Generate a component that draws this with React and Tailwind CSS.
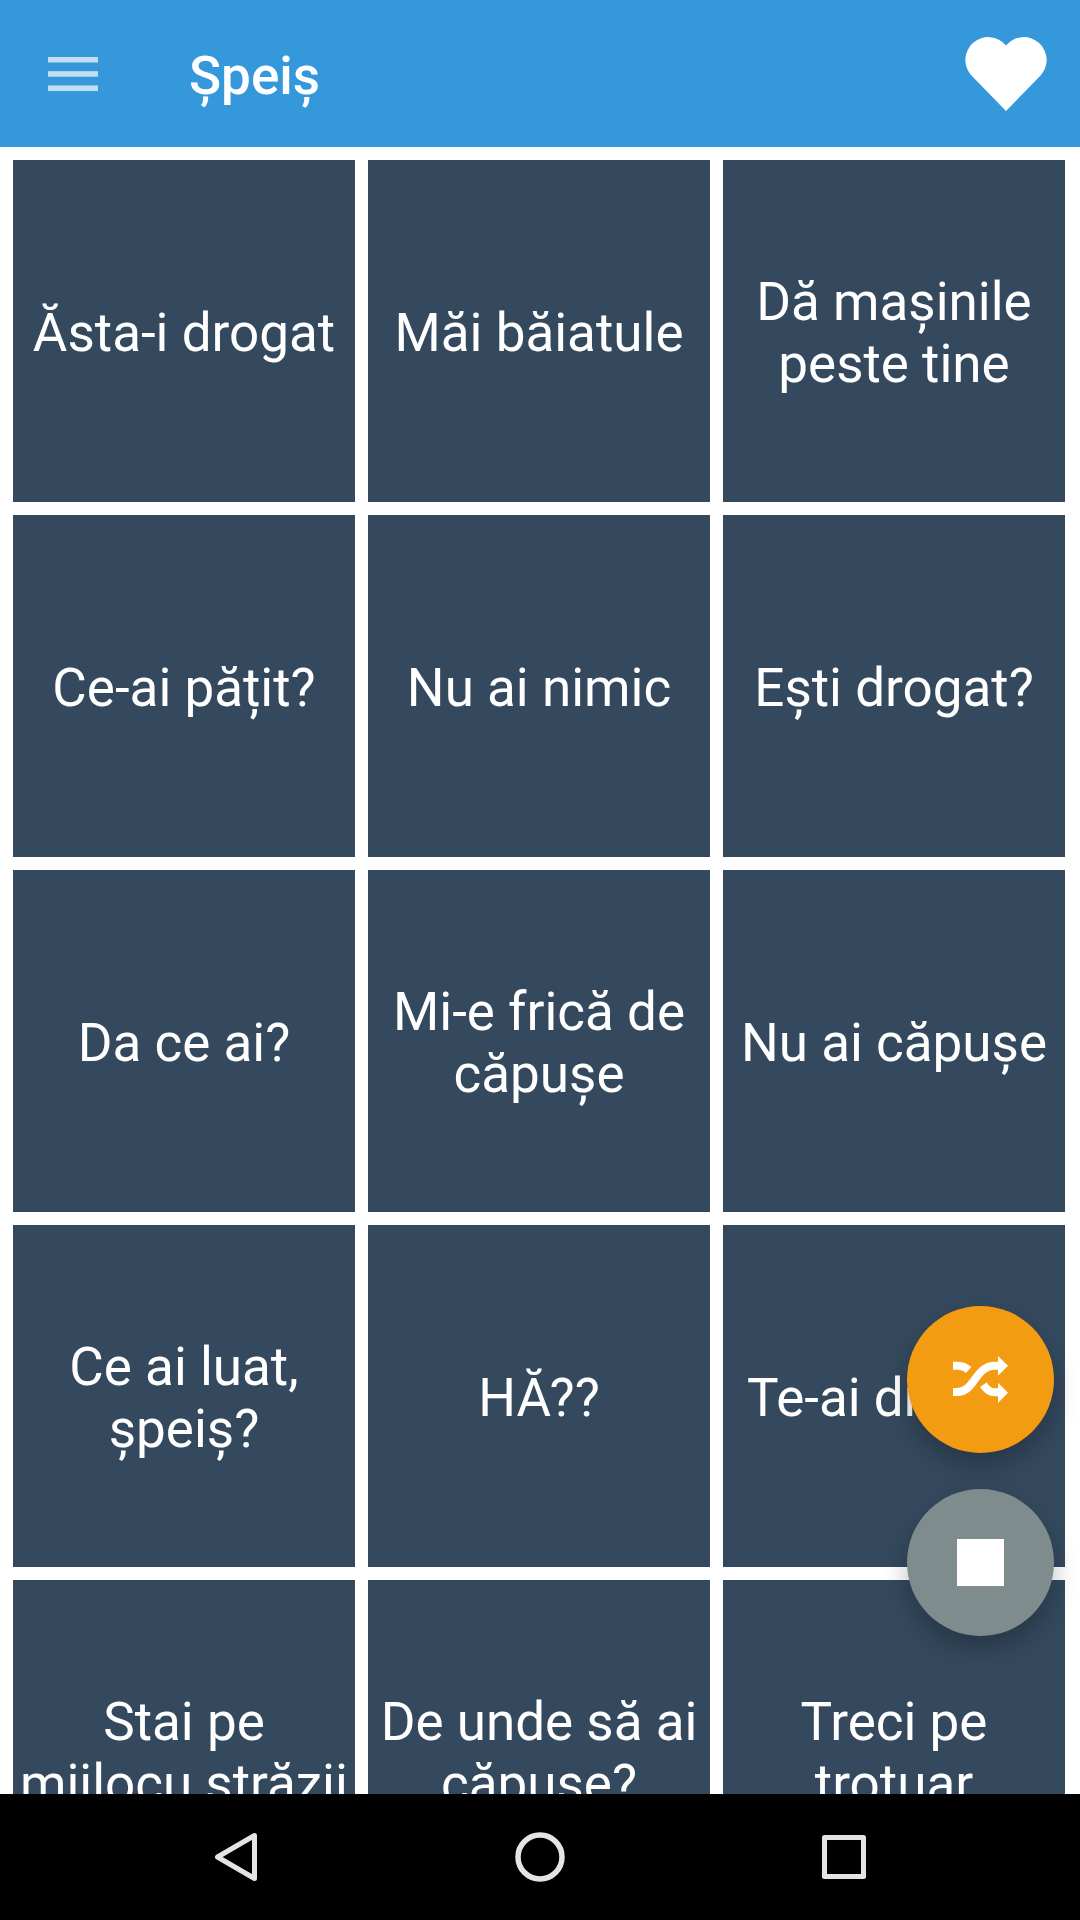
import React, { useState } from 'react'

const sounds = [
  'Ăsta-i drogat',
  'Măi băiatule',
  'Dă mașinile peste tine',
  'Ce-ai pățit?',
  'Nu ai nimic',
  'Ești drogat?',
  'Da ce ai?',
  'Mi-e frică de căpușe',
  'Nu ai căpușe',
  'Ce ai luat, șpeiș?',
  'HĂ??',
  'Te-ai drogat!',
  'Stai pe mijlocu străzii',
  'De unde să ai căpușe?',
  'Treci pe trotuar',
];

const Header = () => (
  <header className='flex h-[147px] shrink-0 items-center bg-[#3498db] pl-12 pr-[33px] text-white'>
    <button type="button" aria-label="Menu">
      <svg className='h-[34px] w-[50px]' viewBox="0 0 50 34" fill="#c0dff5">
        <rect width="50" height="5.5" />
        <rect y="14.2" width="50" height="5.5" />
        <rect y="28.5" width="50" height="5.5" />
      </svg>
    </button>
    <h1 className='ml-[91px] flex-1 pt-1 text-[53px] leading-[62px] font-medium'>Șpeiș</h1>
    <button type="button" aria-label="Favorite">
      <svg className='h-[75px] w-[82px]' viewBox="0 0 82 75" fill="white">
        <path d="M41 9.5A22.9 22.9 0 1 0 6.7 39.8L41 75L75.3 39.8A22.9 22.9 0 1 0 41 9.5Z" />
      </svg>
    </button>
  </header>
);

const SoundTile = ({ text, onPlay }) => (
  <button
    type="button"
    onClick={onPlay}
    className='flex aspect-square items-center justify-center bg-[#34495e] px-1 pt-1 text-center text-[53px] leading-[62px] text-white'
  >
    {text}
  </button>
);

const ActionButtons = ({ onShuffle, onStop }) => (
  <div className='absolute right-[26px] bottom-[158px] flex flex-col gap-9'>
    <button
      type="button"
      aria-label="Shuffle"
      onClick={onShuffle}
      className='flex size-[147px] items-center justify-center rounded-full bg-[#f39c12] shadow-[0_12px_24px_rgba(0,0,0,0.25)]'
    >
      <svg className='h-[47px] w-[55px]' viewBox="219 230 165 141" fill="none" stroke="white" strokeWidth="24">
        <path d="M219 259H230C244 259 256 263 266 272" />
        <path d="M219 338H231C285 338 285 259 345 259H356" />
        <path d="M310 316C320 331 332 339 344 339H356" />
        <path d="M354 230L384 259L354 289ZM354 310L384 340L354 371Z" fill="white" stroke="none" />
      </svg>
    </button>
    <button
      type="button"
      aria-label="Stop"
      onClick={onStop}
      className='flex size-[147px] items-center justify-center rounded-full bg-[#7f8c8d] shadow-[0_12px_24px_rgba(0,0,0,0.25)]'
    >
      <span className='size-[47px] bg-white' />
    </button>
  </div>
);

const NavBar = () => (
  <nav className='flex h-[126px] shrink-0 items-center bg-black px-[84px]'>
    <button type="button" aria-label="Back" className='flex flex-1 justify-center'>
      <svg className='size-[50px]' viewBox="0 0 50 50" fill="none" stroke="#e4e4e4" strokeWidth="5" strokeLinejoin="round">
        <path d="M43.5 3.5V46.5L6.5 25Z" />
      </svg>
    </button>
    <button type="button" aria-label="Home" className='flex flex-1 justify-center'>
      <svg className='size-[50px]' viewBox="0 0 50 50" fill="none" stroke="#e4e4e4" strokeWidth="5.5">
        <circle cx="25" cy="25" r="22" />
      </svg>
    </button>
    <button type="button" aria-label="Recent apps" className='flex flex-1 justify-center'>
      <svg className='size-[50px]' viewBox="0 0 50 50" fill="none" stroke="#e4e4e4" strokeWidth="5" strokeLinejoin="round">
        <rect x="5.5" y="5.5" width="39" height="39" />
      </svg>
    </button>
  </nav>
);

const App = () => {
  const [, setPlaying] = useState(null);

  const playRandom = () => {
    setPlaying(Math.floor(Math.random() * sounds.length));
  };

  return (
    <div className='flex h-screen flex-col bg-white font-[Roboto,sans-serif]'>
      <Header />
      <div className='relative flex min-h-0 flex-1 flex-col'>
        <main className='grid flex-1 grid-cols-3 content-start gap-[13px] overflow-y-auto pt-[13px] pr-[15px] pl-[13px] [scrollbar-width:none]'>
          {sounds.map((text, i) => (
            <SoundTile key={text} text={text} onPlay={() => setPlaying(i)} />
          ))}
        </main>
        <ActionButtons onShuffle={playRandom} onStop={() => setPlaying(null)} />
      </div>
      <NavBar />
    </div>
  )
}

export default App
